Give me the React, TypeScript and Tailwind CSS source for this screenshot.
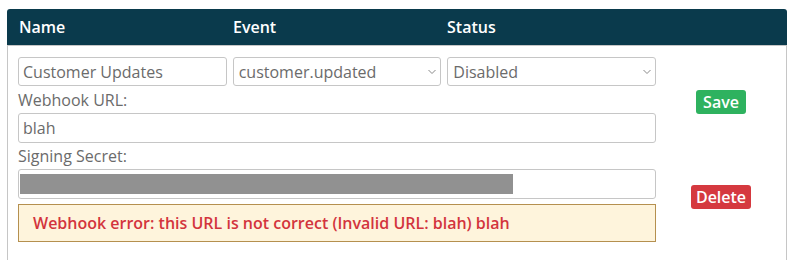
import { useState } from 'react'

const Chevron = () => (
  <svg width="8" height="5" viewBox="0 0 8 5" className="pointer-events-none absolute right-[5px] top-1/2 -translate-y-1/2">
    <path d="M0.5 0.5 L4 4 L7.5 0.5" fill="none" stroke="#888" strokeWidth="1" />
  </svg>
)

function Select({ value, options }: { value: string; options: string[] }) {
  const [v, setV] = useState(value)
  return (
    <div className="relative">
      <select
        value={v}
        onChange={(e) => setV(e.target.value)}
        className="h-[29px] w-full appearance-none rounded-[3px] border border-[#c6c6c6] bg-white pl-[5px] text-[16px] text-[#6b6b6b] outline-none"
      >
        {options.map((o) => (
          <option key={o}>{o}</option>
        ))}
      </select>
      <Chevron />
    </div>
  )
}

export default function App() {
  const [name, setName] = useState('Customer Updates')
  const [url, setUrl] = useState('blah')

  return (
    <div className="ml-[7px] mt-[9px] w-[780px] bg-white" style={{ fontFamily: '"Open Sans", "Noto Sans", sans-serif' }}>
      {/* header */}
      <div className="flex h-[37px] items-center rounded-t-[3px] border-b border-[#c6c6c6] bg-[#0a3a4c] text-[16px] font-semibold text-white">
        <div className="w-[226px] pl-[12px]">Name</div>
        <div className="w-[214px]">Event</div>
        <div>Status</div>
      </div>

      {/* row */}
      <div className="flex h-[214px] border-x border-[#c6c6c6] pl-[10px] pt-[11px]">
        <div className="w-[638px]">
          <div className="grid grid-cols-3 gap-[6px]">
            <input
              value={name}
              onChange={(e) => setName(e.target.value)}
              className="h-[29px] w-full rounded-[3px] border border-[#c6c6c6] px-[4px] text-[16px] text-[#6b6b6b] outline-none"
            />
            <Select value="customer.updated" options={['customer.updated', 'customer.created', 'customer.deleted']} />
            <Select value="Disabled" options={['Enabled', 'Disabled']} />
          </div>

          <div className="pb-[1px] pt-[2px] text-[16px] leading-6 text-[#6b6b6b]">Webhook URL:</div>
          <input
            value={url}
            onChange={(e) => setUrl(e.target.value)}
            className="h-[30px] w-full rounded-[3px] border border-[#c6c6c6] px-[4px] text-[16px] text-[#6b6b6b] outline-none"
          />

          <div className="pt-[1px] pb-[1px] text-[16px] leading-6 text-[#6b6b6b]">Signing Secret:</div>
          <div className="flex h-[30px] items-center rounded-[3px] border border-[#c6c6c6] pl-[1px]">
            <div className="h-[20px] w-[493px] bg-[#919191]" />
          </div>

          <div className="mt-[5px] flex h-[38px] items-center border border-[#b5904f] bg-[#fef4dc] pl-[14px] text-[16px] font-semibold text-[#d3343d]">
            Webhook error: this URL is not correct (Invalid URL: blah) blah
          </div>
        </div>

        {/* actions */}
        <div className="flex w-[130px] flex-col items-center">
          <button className="mt-[33px] h-[24px] w-[50px] rounded-[3px] bg-[#2eb25f] text-[16px] font-semibold leading-6 text-white">
            Save
          </button>
          <button className="mt-[71px] h-[24px] w-[60px] rounded-[3px] bg-[#d5393f] text-[16px] font-semibold leading-6 text-white">
            Delete
          </button>
        </div>
      </div>
    </div>
  )
}
